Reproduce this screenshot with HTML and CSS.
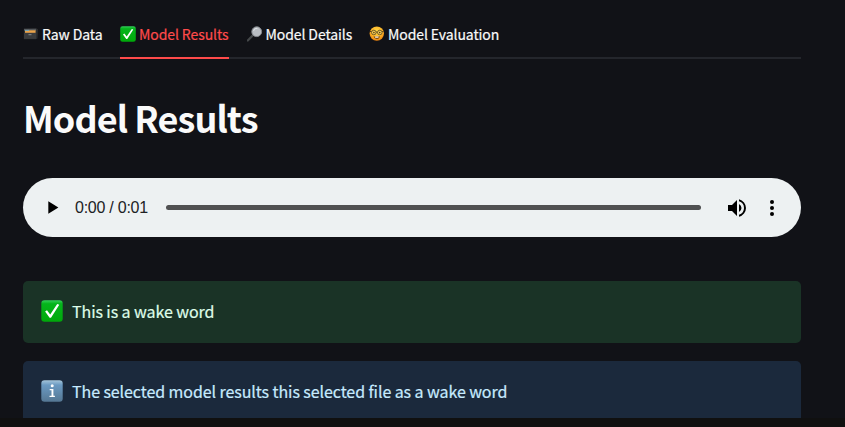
FILE: index.html
```
<!DOCTYPE html>
<html lang="en">
<head>
<meta charset="utf-8">
<title>Model Results</title>
<link rel="stylesheet" href="styles.css">
</head>
<body>
<svg class="defs" aria-hidden="true">
  <defs>
    <linearGradient id="green" x1="0" y1="0" x2="0" y2="1"><stop offset="0" stop-color="#35cf5b"/><stop offset=".16" stop-color="#05b51c"/><stop offset="1" stop-color="#00a90a"/></linearGradient>
    <linearGradient id="blue" x1="0" y1="0" x2="0" y2="1"><stop offset="0" stop-color="#a5c5da"/><stop offset=".22" stop-color="#6b9ac2"/><stop offset="1" stop-color="#557793"/></linearGradient>
    <radialGradient id="face" cx=".5" cy=".35" r=".65"><stop offset="0" stop-color="#ffdc4a"/><stop offset=".6" stop-color="#fdb528"/><stop offset="1" stop-color="#e77d0c"/></radialGradient>
    <symbol id="check" viewBox="0 0 22 22">
      <rect x=".3" y=".3" width="21.4" height="21.4" rx="3.2" fill="url(#green)"/>
      <path d="M4.100 11.600 6 10.200l3.200 4.300L16.200 4l2.100.8-8.300 13H8.600z" fill="#fff"/>
    </symbol>
  </defs>
</svg>
<main class="page">
  <nav class="tabs">
    <a class="tab tab-raw">
      <svg class="tab-icon" viewBox="0 0 16 16"><path d="M.8 2.800 13.200 2.300l1.800 1-.5 9.200-1.500.8H.8z" fill="#2b2d2f"/><path d="M1 2.800h12v2H1z" fill="#55585b"/><path d="M2 4.300h10.600v2.600H2z" fill="#e9a34b"/><path d="M2 3.900h4v1H2z" fill="#71a6bb"/><path d="M1 6.900h12v6H1z" fill="#393b3d"/><path d="M5.500 8.200h3v1h-3z" fill="#85898c"/></svg><span>Raw Data</span></a>
    <a class="tab tab-results active"><svg class="tab-icon"><use href="#check"/></svg><span>Model Results</span></a>
    <a class="tab tab-details">
      <svg class="tab-icon" viewBox="0 0 16 16"><path d="m6.200 9-5.400 5.500" stroke="#45484a" stroke-width="2.200" stroke-linecap="round"/><circle cx="9.700" cy="5.700" r="4.900" fill="#b9bdc3" stroke="#85898e" stroke-width="1"/><path d="M6.500 5a3.600 3.600 0 0 1 4-2.700" stroke="#dce0e4" fill="none"/></svg><span>Model Details</span></a>
    <a class="tab tab-evaluation">
      <svg class="tab-icon" viewBox="0 0 16 16"><circle cx="7.800" cy="7.600" r="7.200" fill="url(#face)"/><g fill="#f4cf55" stroke="#584421" stroke-width=".8"><circle cx="4.800" cy="6.500" r="2.300"/><circle cx="10.800" cy="6.500" r="2.300"/></g><path d="M1 5.500h1.500M13.100 5.500h1.500M7.100 6h1.400" stroke="#584421"/><circle cx="4.900" cy="6.600" r=".8" fill="#543312"/><circle cx="10.700" cy="6.600" r=".8" fill="#543312"/><path d="M4.400 10.500H11.200Q9.800 13.100 7.800 13 5.600 12.900 4.400 10.500" fill="#70400b"/><path d="M6.100 10.500h3.400v1.200H6.100z" fill="#fff"/></svg><span>Model Evaluation</span></a>
  </nav>
  <h1>Model Results</h1>
  <section class="player">
    <svg class="play" viewBox="0 0 11 13"><path d="M.3.2v12.600L10.400 6.500z"/></svg>
    <span class="time">0:00 / 0:01</span>
    <div class="track"></div>
    <svg class="volume" viewBox="3 3 18 18"><path d="M3 9v6h4l5 5V4L7 9H3zm13.500 3A4.500 4.500 0 0 0 14 7.970v8.050A4.470 4.470 0 0 0 16.500 12zM14 3.230v2.060a7 7 0 0 1 0 13.420v2.060a9 9 0 0 0 0-17.540z"/></svg>
    <svg class="more" viewBox="0 0 4 16"><circle cx="2" cy="2" r="2"/><circle cx="2" cy="8" r="2"/><circle cx="2" cy="14" r="2"/></svg>
  </section>
  <section class="alert success"><svg class="alert-icon"><use href="#check"/></svg><p>This is a wake word</p></section>
  <section class="alert info">
    <svg class="alert-icon" viewBox="0 0 22 22"><rect x=".3" y=".3" width="21.400" height="21.400" rx="3.200" fill="url(#blue)"/><circle cx="11.200" cy="5.800" r="1.500" fill="#fff"/><path d="M8.700 9h3.700v6.700h1.500v1.200H8.500v-1.200h2v-5.500H8.700z" fill="#fff"/></svg><p>The selected model results this selected file as a wake word</p></section>
</main>
<footer class="edge"></footer>
</body>
</html>
```
FILE: styles.css
```
* { box-sizing: border-box; }
body {
  margin: 0;
  height: 427px;
  overflow: hidden;
  display: flex;
  flex-direction: column;
  background: #111217;
  color: #fafafa;
  font-family: "Noto Sans CJK JP", "Noto Sans", sans-serif;
}
.defs { position: absolute; width: 0; height: 0; }
.page { height: 418px; padding: 10px 44px 0 23px; overflow: hidden; }
.edge { height: 9px; background: #101010; }
.tabs { height: 49px; display: flex; gap: 17.5px; border-bottom: 2px solid #24262c; }
.tab {
  height: 49px;
  display: flex;
  align-items: center;
  gap: 3px;
  font-size: 14px;
  line-height: 20px;
  letter-spacing: -0.09px;
  -webkit-text-stroke: 0.2px currentColor;
  white-space: nowrap;
  border-bottom: 2px solid transparent;
}
.tab-icon { width: 16px; height: 16px; flex: none; }
.tab-raw { width: 79.5px; }
.tab-results { width: 109px; }
.tab-details { width: 105px; }
.tab-evaluation { width: 131px; }
.active { color: #ff4b4b; border-color: #ff4b4b; }
h1 { margin: 32px 0 0; height: 52px; font-size: 36px; line-height: 52px; font-weight: 700; letter-spacing: -0.92px; white-space: nowrap; }
.player {
  margin-top: 35px;
  height: 59px;
  border-radius: 30px;
  background: #edf1f2;
  display: flex;
  align-items: center;
  padding: 0 27px 0 25px;
}
.play { width: 11px; height: 13px; }
.time { width: 91px; margin-left: 16px; color: #202124; font: 16px/20px "Liberation Sans", sans-serif; letter-spacing: -0.25px; white-space: nowrap; }
.track { flex: 1; height: 5px; border-radius: 3px; background: #505152; }
.volume { width: 18px; height: 18px; margin-left: 27px; }
.more { width: 4px; height: 16px; margin-left: 24px; }
.alert { height: 62px; border-radius: 5px; padding: 0 18px 2px; display: flex; align-items: center; gap: 9px; }
.alert p { margin: 0; font-size: 16px; line-height: 24px; letter-spacing: -0.08px; -webkit-text-stroke: 0.2px currentColor; white-space: nowrap; }
.alert-icon { width: 22px; height: 22px; flex: none; }
.success { margin-top: 44px; background: #1a3326; color: #dffde9; }
.info { margin-top: 18px; background: #1b293c; color: #c7ebff; }
```
